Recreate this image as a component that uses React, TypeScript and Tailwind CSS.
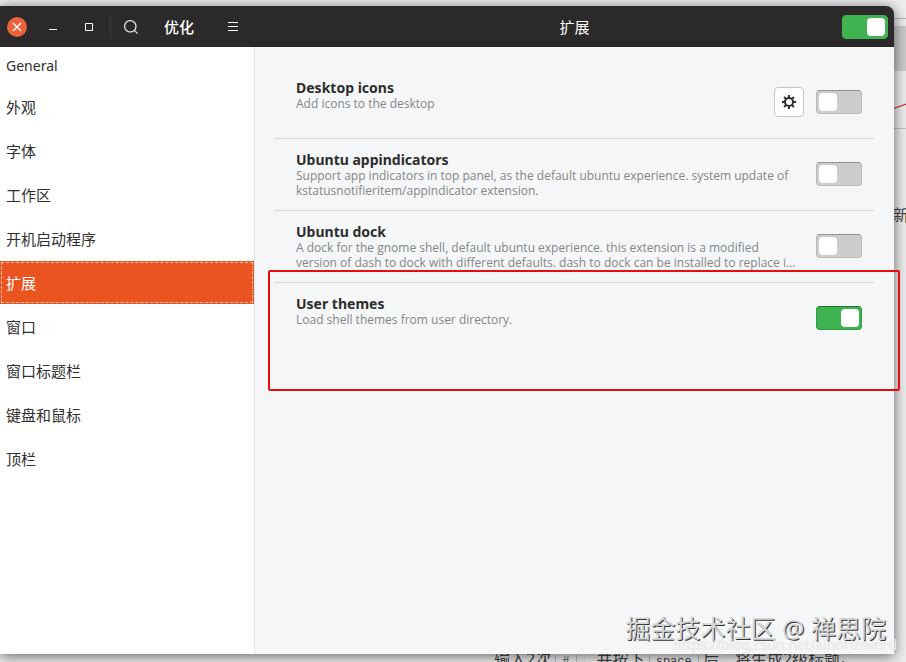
import { useState } from "react";

const categories = ["General", "外观", "字体", "工作区", "开机启动程序", "扩展", "窗口", "窗口标题栏", "键盘和鼠标", "顶栏"];

type Extension = {
  id: string;
  name: string;
  description: string;
  enabled: boolean;
  hasSettings?: boolean;
  marked?: boolean;
};

const extensions: Extension[] = [
  { id: "icons", name: "Desktop icons", description: "Add icons to the desktop", enabled: false, hasSettings: true },
  {
    id: "appindicators",
    name: "Ubuntu appindicators",
    description:
      "Support app indicators in top panel, as the default ubuntu experience. system update of\nkstatusnotifieritem/appindicator extension.",
    enabled: false,
  },
  {
    id: "dock",
    name: "Ubuntu dock",
    description:
      "A dock for the gnome shell, default ubuntu experience. this extension is a modified\nversion of dash to dock with different defaults. dash to dock can be installed to replace i…",
    enabled: false,
  },
  { id: "themes", name: "User themes", description: "Load shell themes from user directory.", enabled: true, marked: true },
];

function Switch({ label, initial, flat }: { label: string; initial: boolean; flat?: boolean }) {
  const [on, setOn] = useState(initial);
  const border = flat
    ? "border-[#3eb34f]"
    : on
      ? "border-[#329c42] border-t-[#23762f]"
      : "border-[#b9b9b9] border-t-[#939393]";
  return (
    <label className={`flex h-6 w-[46px] shrink-0 items-center rounded border px-0.5 ${border} ${on ? "justify-end bg-[#3eb34f]" : "bg-[#cdcdcd]"}`}>
      <input type="checkbox" role="switch" aria-label={label} className="sr-only" checked={on} onChange={(e) => setOn(e.target.checked)} />
      <span className="size-[18px] rounded bg-white" />
    </label>
  );
}

function Gear() {
  return (
    <svg viewBox="0 0 16 16" className="size-4" fill="none" stroke="#303030">
      <circle cx="8" cy="8" r="4" strokeWidth="2" />
      <path
        d="M8 1v3M8 12v3M1 8h3M12 8h3M3.05 3.05l2.1 2.1M10.85 10.85l2.1 2.1M3.05 12.95l2.1-2.1M10.85 5.15l2.1-2.1"
        strokeWidth="2"
      />
    </svg>
  );
}

function ExtensionRow({ ext }: { ext: Extension }) {
  return (
    <li className={`relative flex h-[72px] items-center pr-3 pb-0.5 pl-[22px] ${ext.marked ? "" : "border-b border-[#d4d6d8]"}`}>
      <div className="min-w-0 flex-1 self-start pt-3">
        <h2 className="text-[14px] leading-[17px] font-bold text-[#2d2d2d]">{ext.name}</h2>
        <p className="font-['Open_Sans','Noto_Sans',sans-serif] text-[12px] leading-[15px] whitespace-pre text-[#858686]">{ext.description}</p>
      </div>
      {ext.hasSettings && (
        <button aria-label={`${ext.name} settings`} className="mr-3 flex size-[30px] items-center justify-center rounded border border-[#c4c4c4] bg-white">
          <Gear />
        </button>
      )}
      <Switch label={ext.name} initial={ext.enabled} />
      {ext.marked && <div className="pointer-events-none absolute -top-[13px] -right-[26px] -left-[6px] z-10 h-[121px] rounded-xs border-2 border-[#e80c0c]" />}
    </li>
  );
}

function TitleBar() {
  return (
    <header className="flex h-[41px] shrink-0 rounded-tr-lg bg-[#2b2929] text-white">
      <div className="flex w-[255px] items-center">
        <button aria-label="Close" className="ml-[7px] flex size-5 items-center justify-center rounded-full bg-[#e9623a]">
          <svg viewBox="0 0 20 20" className="size-5" stroke="white" strokeWidth="1.4">
            <path d="M6 6l8 8M14 6l-8 8" />
          </svg>
        </button>
        <button aria-label="Minimize" className="ml-4 size-5">
          <svg viewBox="0 0 20 20" className="size-5" fill="white">
            <path d="M6 12h8v1H6z" />
          </svg>
        </button>
        <button aria-label="Maximize" className="ml-4 size-5">
          <svg viewBox="0 0 20 20" className="size-5" fill="none" stroke="white">
            <path d="M6.5 6.5h7v7h-7z" />
          </svg>
        </button>
        <span className="ml-[11px] h-6 w-px bg-[#3b3939]" />
        <button aria-label="Search" className="ml-[10px] size-5">
          <svg viewBox="0 0 20 20" className="size-5" fill="none" stroke="#ededed" strokeWidth="1.2">
            <circle cx="9.3" cy="9.3" r="5.7" />
            <path d="M13.4 13.4l3.2 3.2" />
          </svg>
        </button>
        <h1 className="ml-[23px] text-[15px] leading-5 font-medium">优化</h1>
        <button aria-label="Menu" className="ml-[29px] size-5">
          <svg viewBox="0 0 20 20" className="size-5" fill="white">
            <path d="M5 5h10v1H5zM5 9h10v1H5zM5 13h10v1H5z" />
          </svg>
        </button>
      </div>
      <div className="grid flex-1 grid-cols-[1fr_auto_1fr] items-center px-1.5">
        <span className="col-start-2 text-[15px] leading-5">扩展</span>
        <div className="flex justify-end">
          <Switch label="扩展" initial flat />
        </div>
      </div>
    </header>
  );
}

export default function App() {
  const [active, setActive] = useState("扩展");

  return (
    <div className="relative flex min-h-screen flex-col overflow-hidden bg-[#ededed] pt-1.5 pr-3 pb-2 font-['Noto_Sans','Noto_Sans_CJK_SC',sans-serif]">
      {/* page showing behind the window */}
      <div className="absolute top-[18px] right-0 w-3 border-t border-[#b5b5b5]" />
      <div className="absolute top-[26px] right-0 h-[45px] w-3 bg-[#cbcbcb]" />
      <svg viewBox="0 0 12 8" className="absolute top-[102px] right-0 h-2 w-3" stroke="#d8303c" strokeWidth="1.2">
        <path d="M0 6.5L12 2" />
      </svg>
      <div className="absolute top-[128px] right-0 w-3 border-t border-[#c4c4c4]" />
      <span className="absolute top-[204px] -right-[3px] text-[16px] leading-[22px] text-[#444]">新</span>
      <p className="absolute top-[648px] left-[494px] text-[16px] leading-[22px] whitespace-pre text-[#444]">
        输入2次 <code className="mr-1 border-x border-[#bbb] px-1.5 font-['Liberation_Mono'] text-[12px]">#</code>，并按下{" "}
        <code className="border-x border-[#bbb] px-1.5 font-['Liberation_Mono'] text-[12px]">space</code> 后，将生成2级标题。
      </p>

      <main className="relative flex flex-1 flex-col rounded-tr-lg shadow-[0_2px_14px_rgba(0,0,0,0.6)]">
        <TitleBar />
        <div className="flex flex-1">
          <nav className="flex w-[255px] shrink-0 flex-col gap-px border-r border-[#e4e4e4] bg-white">
            {categories.map((name) => (
              <button
                key={name}
                onClick={() => setActive(name)}
                className={`pl-1.5 text-left ${name === "General" ? "h-[37px] text-[14px]" : "h-[43px] pt-0.5 text-[15px]"} ${
                  name === active ? "bg-[#e95420] text-white outline-1 -outline-offset-2 outline-[#f8c4ad] outline-dashed" : "text-[#303030]"
                }`}
              >
                {name}
              </button>
            ))}
          </nav>
          <ul className="flex-1 bg-[#f4f6f7] pt-5 pr-5 pl-[19px]">
            {extensions.map((ext) => (
              <ExtensionRow key={ext.id} ext={ext} />
            ))}
          </ul>
        </div>
      </main>

      <p className="absolute right-5 bottom-4 text-[25px] leading-9 text-[#d6d6d6] [text-shadow:1px_1px_0_#333]">掘金技术社区 @ 禅思院</p>
      <p className="absolute right-[9px] bottom-[7px] text-[14px] leading-5 text-white/60 [text-shadow:0_0_1px_#ccc]">https://blog.csdn.net/ainorthword</p>
    </div>
  );
}
